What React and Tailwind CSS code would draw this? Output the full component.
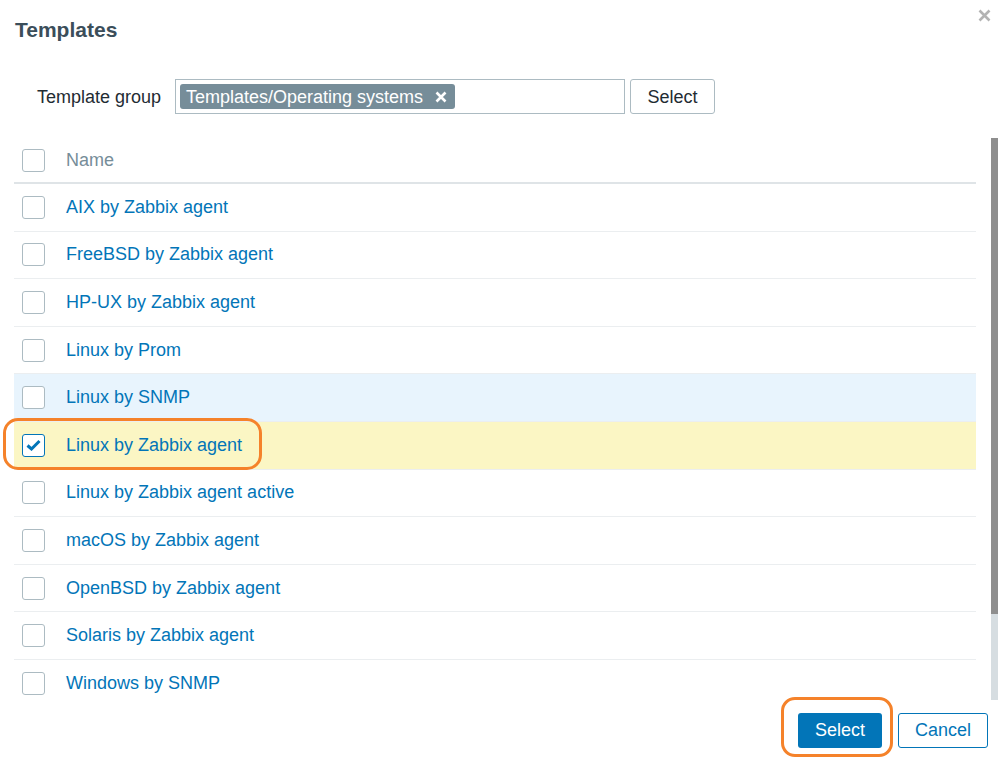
import React from 'react';

const templates = [
  { name: "AIX by Zabbix agent" },
  { name: "FreeBSD by Zabbix agent" },
  { name: "HP-UX by Zabbix agent" },
  { name: "Linux by Prom" },
  { name: "Linux by SNMP", hover: true },
  { name: "Linux by Zabbix agent", checked: true },
  { name: "Linux by Zabbix agent active" },
  { name: "macOS by Zabbix agent" },
  { name: "OpenBSD by Zabbix agent" },
  { name: "Solaris by Zabbix agent" },
  { name: "Windows by SNMP" },
];

function Checkbox({ checked }) {
  return (
    <span className={`flex h-[23px] w-[23px] items-center justify-center rounded-[3px] border bg-white ${checked ? 'border-[#0275b8]' : 'border-[#acbbc2]'}`}>
      {checked && (
        <svg width="15" height="12" viewBox="0 0 15 12">
          <path d="M1.5 6.5 L5.5 10 L13.5 2" fill="none" stroke="#0275b8" strokeWidth="3" />
        </svg>
      )}
    </span>
  );
}

export default function App() {
  return (
    <div className="relative h-[759px] w-[998px] overflow-hidden bg-white font-['Liberation_Sans',Arial,sans-serif]">
      {/* close */}
      <svg className="absolute right-[7px] top-[9px]" width="13" height="13" viewBox="0 0 13 13">
        <path d="M1.5 1.5 L11.5 11.5 M11.5 1.5 L1.5 11.5" stroke="#b3b3b3" strokeWidth="2.6" />
      </svg>

      <div className="px-[15px] pt-[17px]">
        <h2 className="text-[21px] font-bold leading-[26px] text-[#3b4e5a]">Templates</h2>
      </div>

      {/* filter */}
      <div className="mt-[36px] flex h-[35px] items-center">
        <label className="w-[175px] pl-[37px] pt-[2px] text-[18px] text-[#1f2c33]">Template group</label>
        <div className="flex h-[35px] w-[450px] items-center border border-[#acbbc2] px-[4px]">
          <span className="flex h-[25px] items-center gap-[12px] rounded-[3px] bg-[#768d99] pl-[6px] pr-[8px] text-[18px] leading-none text-white">
            Templates/Operating systems
            <svg width="12" height="12" viewBox="0 0 12 12">
              <path d="M1.5 1.5 L10.5 10.5 M10.5 1.5 L1.5 10.5" stroke="#fff" strokeWidth="2.6" />
            </svg>
          </span>
        </div>
        <button className="ml-[5px] h-[35px] w-[85px] rounded-[3px] border border-[#acbbc2] bg-white pt-[2px] text-[18px] text-[#1f2c33]">
          Select
        </button>
      </div>

      {/* table */}
      <div className="mt-[24px] flex h-[562px]">
        <div className="ml-[14px] mr-[15px] flex-1 overflow-hidden">
          <div className="flex h-[46px] items-center border-b-2 border-[#dfe4e7]">
            <div className="w-[52px] pl-[8px]">
              <Checkbox />
            </div>
            <span className="text-[18px] text-[#768d99]">Name</span>
          </div>
          {templates.map((t) => (
            <div
              key={t.name}
              className={`flex h-[47.6px] items-center border-b border-[#ebeef0] ${t.checked ? 'bg-[#fbf6c4]' : t.hover ? 'bg-[#e8f4fd]' : 'bg-white'}`}
            >
              <div className="w-[52px] pl-[8px]">
                <Checkbox checked={t.checked} />
              </div>
              <span className="text-[18px] text-[#0275b8]">{t.name}</span>
            </div>
          ))}
        </div>
        <div className="flex w-[7px] flex-col bg-[#d6dde1]">
          <div className="h-[476px] bg-[#8e8e8e]" />
        </div>
      </div>

      {/* footer */}
      <div className="mt-[13px] flex justify-end gap-[16px] pr-[10px]">
        <button className="h-[35px] w-[84px] rounded-[3px] bg-[#0275b8] text-[18px] text-white">Select</button>
        <button className="h-[35px] w-[90px] rounded-[3px] border border-[#0275b8] bg-white text-[18px] text-[#0275b8]">Cancel</button>
      </div>

      {/* annotations */}
      <div className="absolute left-[3px] top-[418px] h-[52px] w-[259px] rounded-[15px] border-[3px] border-[#f5822a]" />
      <div className="absolute left-[781px] top-[697px] h-[60px] w-[112px] rounded-[14px] border-[3px] border-[#f5822a]" />
    </div>
  );
}
